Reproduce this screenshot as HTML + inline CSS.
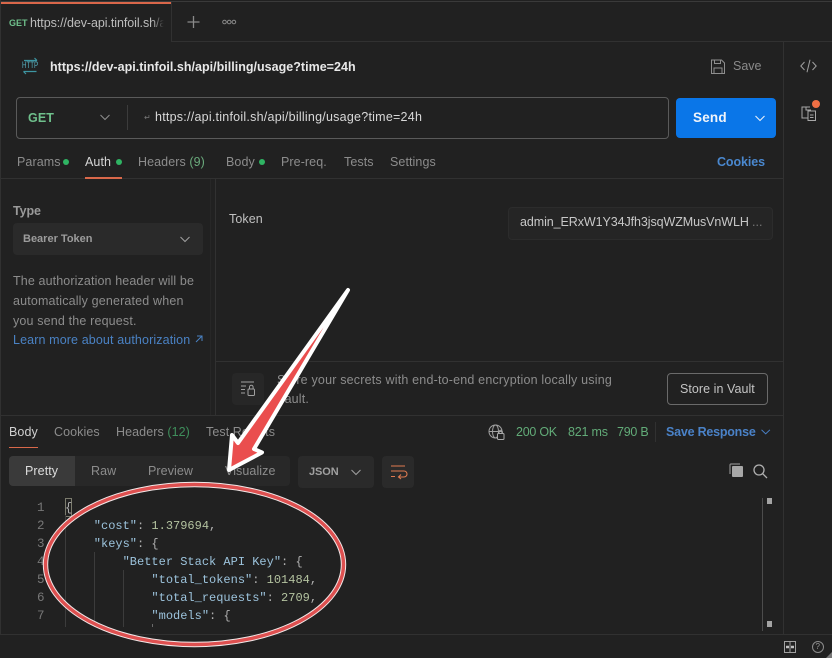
<!DOCTYPE html>
<html><head><meta charset="utf-8">
<style>
html,body{margin:0;padding:0;background:#212121;}
#p{position:relative;width:832px;height:658px;overflow:hidden;background:#212121;font-family:"Liberation Sans",sans-serif;font-size:12.5px;color:#a0a0a0;}
.t{position:absolute;white-space:nowrap;line-height:16px;letter-spacing:.08px;}
.b{position:absolute;}
.m{position:absolute;white-space:pre;font-family:"Liberation Mono",monospace;font-size:12px;line-height:18px;color:#9cc3dc;}
.n{color:#b4c3a0}.w{color:#b0b0b0}
svg{position:absolute;overflow:visible;}
</style></head><body><div id="p">
<!-- lines -->
<div class="b" style="left:0;top:1px;width:832px;height:1px;background:#3a3a3a"></div>
<div class="b" style="left:1px;top:2px;width:171px;height:2px;background:#d9674a"></div>
<div class="b" style="left:171px;top:2px;width:1px;height:40px;background:#313131"></div>
<div class="b" style="left:172px;top:41px;width:660px;height:1px;background:#313131"></div>
<div class="b" style="left:783px;top:41px;width:1px;height:593px;background:#313131"></div>
<div class="b" style="left:0;top:178px;width:783px;height:1px;background:#313131"></div>
<div class="b" style="left:0;top:415px;width:783px;height:1px;background:#313131"></div>
<div class="b" style="left:210px;top:179px;width:1px;height:236px;background:#272727"></div>
<div class="b" style="left:215px;top:179px;width:1px;height:236px;background:#313131"></div>
<div class="b" style="left:216px;top:361px;width:567px;height:1px;background:#313131"></div>
<div class="b" style="left:0;top:634px;width:832px;height:1px;background:#313131"></div>
<div class="b" style="left:0;top:0;width:1px;height:634px;background:#313131"></div>

<!-- tab bar -->
<div class="t" style="left:9px;top:15px;font-size:9px;font-weight:bold;color:#6fc08c;letter-spacing:0">GET</div>
<div class="t" style="left:30px;top:15px;width:134px;overflow:hidden;color:#bdbdbd;font-size:12.500px;letter-spacing:-.07px">https://dev-api.tinfoil.sh/a</div>
<div class="b" style="left:152px;top:12px;width:14px;height:22px;background:linear-gradient(90deg,rgba(33,33,33,0),#212121 85%)"></div>
<svg style="left:187px;top:15px" width="14" height="14"><path d="M6.500 1v12M.5 7h12" stroke="#8a8a8a" stroke-width="1.300" fill="none"/></svg>
<svg style="left:222px;top:19px" width="15" height="6"><circle cx="2.500" cy="3" r="1.800" fill="none" stroke="#8a8a8a"/><circle cx="7.200" cy="3" r="1.800" fill="none" stroke="#8a8a8a"/><circle cx="11.900" cy="3" r="1.800" fill="none" stroke="#8a8a8a"/></svg>

<!-- title -->
<svg style="left:21px;top:57px" width="18" height="18"><path d="M3 3.500h13M13.500 1l2.500 2.500M2.500 14.500h13M2.500 14.500L5 17" stroke="#3e96a3" stroke-width="1.200" fill="none"/></svg>
<div class="t" style="left:22px;top:60px;font-size:9.500px;color:#58b4c4;letter-spacing:0;line-height:12px;transform:scaleX(.65);transform-origin:left center">HTTP</div>
<div class="t" style="left:50px;top:59px;font-size:12.500px;font-weight:bold;color:#e8e8e8;letter-spacing:.02px">https://dev-api.tinfoil.sh/api/billing/usage?time=24h</div>
<svg style="left:711px;top:59px" width="14" height="15"><path d="M.5 1h10l3 3v10.500H.5zM3.500 1v3.500h6V1M3 14.500V9h8v5.500" stroke="#8e8e8e" stroke-width="1" fill="none"/></svg>
<div class="t" style="left:733px;top:58px;color:#8a8a8a;letter-spacing:0">Save</div>

<!-- url bar -->
<div class="b" style="left:16px;top:97px;width:651px;height:40px;border:1px solid #5a5a5a;border-radius:4px"></div>
<div class="t" style="left:28px;top:110px;font-weight:bold;color:#6fc08c;letter-spacing:.1px">GET</div>
<svg style="left:100px;top:114px" width="10" height="7"><path d="M.5 1l4.500 4.500L9.500 1" stroke="#8e8e8e" stroke-width="1" fill="none"/></svg>
<div class="b" style="left:127px;top:105px;width:1px;height:25px;background:#3c3c3c"></div>
<div class="t" style="left:144px;top:110px;font-size:8px;color:#777;letter-spacing:0">↵</div>
<div class="t" style="left:155px;top:109px;color:#d8d8d8;letter-spacing:.24px">https://api.tinfoil.sh/api/billing/usage?time=24h</div>
<div class="b" style="left:676px;top:98px;width:100px;height:40px;background:#0a76e8;border-radius:4px"></div>
<div class="t" style="left:693px;top:110px;font-size:13.500px;font-weight:bold;color:#f0f4fa;letter-spacing:.2px">Send</div>
<svg style="left:755px;top:115px" width="10" height="7"><path d="M.5 1l4.500 4.500L9.500 1" stroke="#e8f0fa" stroke-width="1.100" fill="none"/></svg>

<!-- request tabs -->
<div class="t" style="left:17px;top:154px;color:#8c8c8c">Params</div>
<div class="b" style="left:63px;top:159px;width:6px;height:6px;border-radius:50%;background:#2fb463"></div>
<div class="t" style="left:85px;top:154px;color:#d6d6d6">Auth</div>
<div class="b" style="left:116px;top:159px;width:6px;height:6px;border-radius:50%;background:#2fb463"></div>
<div class="b" style="left:85px;top:177px;width:37px;height:2px;background:#d9684a"></div>
<div class="t" style="left:138px;top:154px;color:#8c8c8c">Headers <span style="color:#6aaa7c">(9)</span></div>
<div class="t" style="left:226px;top:154px;color:#8c8c8c">Body</div>
<div class="b" style="left:259px;top:159px;width:6px;height:6px;border-radius:50%;background:#2fb463"></div>
<div class="t" style="left:281px;top:154px;color:#8c8c8c">Pre-req.</div>
<div class="t" style="left:344px;top:154px;color:#8c8c8c">Tests</div>
<div class="t" style="left:390px;top:154px;color:#8c8c8c">Settings</div>
<div class="t" style="left:717px;top:154px;color:#4a88cf;font-weight:bold;letter-spacing:-.1px">Cookies</div>

<!-- right rail -->
<svg style="left:800px;top:59px" width="17" height="14"><path d="M4.500 3L.8 7l3.700 4M12.500 3l3.700 4-3.700 4M10 .8L7 13.200" stroke="#a0a0a0" stroke-width="1" fill="none"/></svg>
<svg style="left:801px;top:106px" width="16" height="15"><path d="M9 1H1v11h6M5 1v3h5M7 5h7.500v9.500H7zM9 9h3.500M9 11.500h3.500" stroke="#a8a8a8" stroke-width="1" fill="none"/></svg>
<div class="b" style="left:812px;top:100px;width:8px;height:8px;border-radius:50%;background:#ef6f44"></div>

<!-- auth left -->
<div class="t" style="left:13px;top:203px;color:#9a9a9a;font-weight:bold;letter-spacing:-.1px">Type</div>
<div class="b" style="left:13px;top:223px;width:190px;height:32px;background:#2a2a2a;border-radius:4px"></div>
<div class="t" style="left:23px;top:231px;font-size:11px;font-weight:bold;color:#9c9c9c;letter-spacing:0">Bearer Token</div>
<svg style="left:180px;top:236px" width="10" height="7"><path d="M.5 1l4.500 4.500L9.500 1" stroke="#a0a0a0" stroke-width="1" fill="none"/></svg>
<div class="t" style="left:13px;top:273px;color:#8c8c8c;letter-spacing:.12px">The authorization header will be</div>
<div class="t" style="left:13px;top:293px;color:#8c8c8c;letter-spacing:.16px">automatically generated when</div>
<div class="t" style="left:13px;top:313px;color:#8c8c8c;letter-spacing:.16px">you send the request.</div>
<div class="t" style="left:13px;top:332px;color:#4a82c4;letter-spacing:.12px">Learn more about authorization</div>
<svg style="left:195px;top:335px" width="8" height="8"><path d="M1 7l5.500-5.500M2 1h5v5" stroke="#4a82c4" stroke-width="1" fill="none"/></svg>

<!-- token -->
<div class="t" style="left:229px;top:211px;color:#c0c0c0">Token</div>
<div class="b" style="left:508px;top:207px;width:263px;height:31px;background:#252525;border:1px solid #2c2c2c;border-radius:4px"></div>
<div class="t" style="left:520px;top:214px;color:#c8c8c8;letter-spacing:-.08px">admin_ERxW1Y34Jfh3jsqWZMusVnWLH</div>
<div class="t" style="left:752px;top:214px;color:#777;letter-spacing:0">...</div>

<!-- vault -->
<div class="b" style="left:232px;top:373px;width:32px;height:32px;background:#272727;border-radius:4px"></div>
<svg style="left:240px;top:381px" width="16" height="17"><path d="M1 1h13M1 5h5M1 8.500h4M1 12h4" stroke="#a0a0a0" stroke-width="1" fill="none"/><rect x="8" y="8" width="6.500" height="6.500" rx="1" fill="none" stroke="#a0a0a0"/><path d="M9.500 8V6a1.800 1.800 0 0 1 3.600 0v2" fill="none" stroke="#a0a0a0"/></svg>
<div class="t" style="left:277px;top:372px;color:#8c8c8c;letter-spacing:.19px">Store your secrets with end-to-end encryption locally using</div>
<div class="t" style="left:277px;top:391px;color:#8c8c8c;letter-spacing:.16px">Vault.</div>
<div class="b" style="left:667px;top:373px;width:99px;height:30px;border:1px solid #6a6a6a;border-radius:4px"></div>
<div class="t" style="left:680px;top:381px;color:#c4c4c4;letter-spacing:.05px">Store in Vault</div>

<!-- response tabs -->
<div class="t" style="left:9px;top:424px;color:#d0d0d0">Body</div>
<div class="b" style="left:9px;top:447px;width:29px;height:1px;background:#d9684a"></div>
<div class="t" style="left:54px;top:424px;color:#8c8c8c">Cookies</div>
<div class="t" style="left:116px;top:424px;color:#8c8c8c">Headers <span style="color:#3f8f5c">(12)</span></div>
<div class="t" style="left:206px;top:424px;color:#8c8c8c">Test Results</div>
<svg style="left:488px;top:424px" width="17" height="17"><circle cx="7.500" cy="7.500" r="6.500" fill="none" stroke="#a0a0a0"/><ellipse cx="7.500" cy="7.500" rx="3" ry="6.500" fill="none" stroke="#a0a0a0"/><path d="M1 7.500h13" stroke="#a0a0a0"/><rect x="9.500" y="9.500" width="6.500" height="6" rx="1" fill="#212121" stroke="#a8a8a8"/><path d="M11 9.500V8a1.700 1.700 0 0 1 3.400 0v1.500" fill="none" stroke="#a8a8a8"/></svg>
<div class="t" style="left:516px;top:424px;color:#62ab78;letter-spacing:-.25px">200 OK</div>
<div class="t" style="left:568px;top:424px;color:#62ab78;letter-spacing:-.2px">821 ms</div>
<div class="t" style="left:617px;top:424px;color:#62ab78;letter-spacing:-.25px">790 B</div>
<div class="b" style="left:655px;top:422px;width:1px;height:20px;background:#313131"></div>
<div class="t" style="left:666px;top:424px;color:#4a82c8;font-weight:bold;letter-spacing:-.22px">Save Response</div>
<svg style="left:761px;top:429px" width="10" height="6"><path d="M.5.800l4.200 4 4.200-4" stroke="#4a82c8" stroke-width="1" fill="none"/></svg>

<!-- view bar -->
<div class="b" style="left:9px;top:456px;width:281px;height:30px;background:#282828;border-radius:4px"></div>
<div class="b" style="left:9px;top:456px;width:66px;height:30px;background:#3a3a3a;border-radius:4px 0 0 4px"></div>
<div class="t" style="left:25px;top:463px;color:#dcdcdc">Pretty</div>
<div class="t" style="left:91px;top:463px;color:#8c8c8c">Raw</div>
<div class="t" style="left:148px;top:463px;color:#8c8c8c">Preview</div>
<div class="t" style="left:225px;top:463px;color:#8c8c8c">Visualize</div>
<div class="b" style="left:298px;top:456px;width:76px;height:32px;background:#2a2a2a;border-radius:4px"></div>
<div class="t" style="left:309px;top:464px;font-size:11px;font-weight:bold;color:#a0a0a0;letter-spacing:-.1px">JSON</div>
<svg style="left:351px;top:469px" width="10" height="7"><path d="M.5 1l4.500 4.500L9.500 1" stroke="#a0a0a0" stroke-width="1" fill="none"/></svg>
<div class="b" style="left:382px;top:456px;width:32px;height:32px;background:#2a2a2a;border-radius:4px"></div>
<svg style="left:390px;top:465px" width="16" height="14"><path d="M1 1h14M1 6h13a2 2 0 0 1 0 6H9M11 9.500L8.500 12 11 14M1 11.500h4" stroke="#e07a50" stroke-width="1.100" fill="none"/></svg>
<svg style="left:729px;top:463px" width="15" height="15"><rect x="3" y="3" width="11" height="11" rx="1" fill="#a8a8a8"/><path d="M1 11V2a1 1 0 0 1 1-1h9" stroke="#8a8a8a" stroke-width="1.200" fill="none"/></svg>
<svg style="left:753px;top:464px" width="15" height="15"><circle cx="6" cy="6" r="5" fill="none" stroke="#b0b0b0" stroke-width="1.300"/><path d="M9.800 9.800L14 14" stroke="#b0b0b0" stroke-width="1.300"/></svg>

<!-- code -->
<div class="m" style="left:37px;top:499px;color:#777;font-size:12.500px">1
2
3
4
5
6
7</div>
<div class="b" style="left:65px;top:498px;width:5px;height:17px;border:1px solid #7c7c6e"></div>
<div class="b" style="left:65px;top:515px;width:1px;height:112px;background:#3c3c3c"></div>
<div class="b" style="left:94px;top:552px;width:1px;height:75px;background:#3c3c3c"></div>
<div class="b" style="left:123px;top:570px;width:1px;height:57px;background:#3c3c3c"></div>
<div class="b" style="left:152px;top:624px;width:1px;height:3px;background:#6a6a6a"></div>
<div class="m" style="left:65px;top:499px"><span class="w">{</span>
    "cost"<span class="w">:</span> <span class="n">1.379694</span><span class="w">,</span>
    "keys"<span class="w">:</span> <span class="w">{</span>
        "Better Stack API Key"<span class="w">:</span> <span class="w">{</span>
            "total_tokens"<span class="w">:</span> <span class="n">101484</span><span class="w">,</span>
            "total_requests"<span class="w">:</span> <span class="n">2709</span><span class="w">,</span>
            "models"<span class="w">:</span> <span class="w">{</span></div>

<!-- scrollbar -->
<div class="b" style="left:762px;top:498px;width:1px;height:133px;background:#4c4c4c"></div>
<div class="b" style="left:767px;top:498px;width:5px;height:6px;background:#a4a4a4"></div>
<div class="b" style="left:767px;top:621px;width:5px;height:6px;background:#a4a4a4"></div>

<!-- footer icons -->
<svg style="left:784px;top:641px" width="12" height="12"><rect x=".5" y=".5" width="11" height="11" fill="none" stroke="#a0a0a0"/><path d="M6 .5v11" stroke="#a0a0a0"/><path d="M2 6h3M7 6h3" stroke="#c0c0c0" stroke-width="2.500"/></svg>
<svg style="left:812px;top:641px" width="12" height="12"><circle cx="6" cy="6" r="5.500" fill="none" stroke="#8c8c8c"/></svg>
<div class="t" style="left:815.500px;top:641px;font-size:8px;line-height:12px;color:#9a9a9a;letter-spacing:0">?</div>
<svg style="left:826px;top:652px" width="6" height="6"><path d="M6 0v6H0z" fill="#777"/></svg>

<!-- annotations -->
<svg style="left:0;top:0" width="832" height="658">
<ellipse cx="194.500" cy="564.500" rx="149" ry="80" fill="none" stroke="#f2e8e8" stroke-width="5.400"/>
<ellipse cx="194.500" cy="564.500" rx="149" ry="80" fill="none" stroke="#de5050" stroke-width="3.400"/>
<path d="M348 290L254 449 262 452.500 229 470 232 435 238 443z" fill="#ea4e4e" stroke="#fff" stroke-width="4" stroke-linejoin="round"/>
</svg>
</div></body></html>
